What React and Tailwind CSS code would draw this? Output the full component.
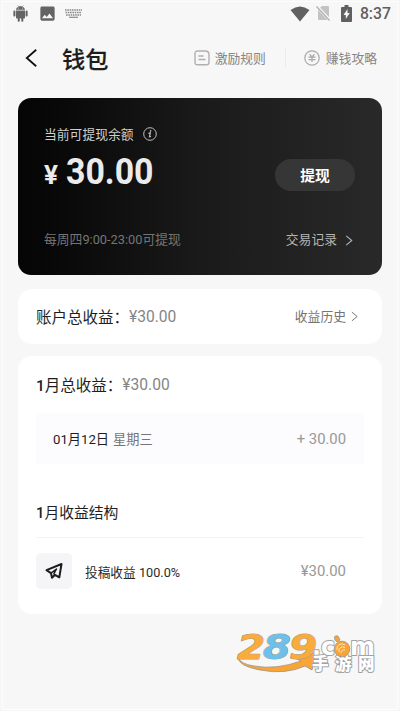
import { AiFillAndroid } from "react-icons/ai";
import { MdImage } from "react-icons/md";

const FONT = "font-[Roboto,'Noto_Sans_CJK_SC',sans-serif]";

function StatusBar() {
  return (
    <div className="flex h-7 items-center pl-[11px] pr-[9px] text-[#646464]">
      <AiFillAndroid className="-mt-px h-[21px] w-[19px]" />
      <MdImage className="-mt-px ml-[8px] h-[19px] w-[19px]" />
      <svg viewBox="0 0 17 9" className="-mt-px ml-[8px] h-[9px] w-[17px]" fill="none" stroke="#8a8a8a">
        <path d="M0 1h17M0.5 3.5h16M1 6h15" strokeWidth="1.5" strokeDasharray="1.6 0.7" />
        <path d="M4 8.3h9" strokeWidth="1.2" />
      </svg>
      <div className="ml-auto flex items-center">
        <svg viewBox="0 0 20 16" className="-mt-px h-4 w-5" fill="#606060">
          <path d="M10 15.5 0.5 4Q10-3 19.5 4Z" />
        </svg>
        <svg viewBox="0 0 15 16" className="-mt-[2px] ml-[6px] h-4 w-[15px]">
          <path d="M2 4.500 6 1h6q1 0 1 1v13H3q-1 0-1-1Z" fill="#c3c3c3" />
          <path d="M0.500 1 14 15.500" stroke="#f7f7f7" strokeWidth="3" />
          <path d="M0.500 1.500 13.500 15.500" stroke="#b0b0b0" strokeWidth="1.300" />
        </svg>
        <svg viewBox="0 0 11 17" className="-mt-[2px] ml-[10px] h-[17px] w-[11px]">
          <path d="M1 2h2.500V0h4v2H10q1 0 1 1v13q0 1-1 1H1q-1 0-1-1V3q0-1 1-1Z" fill="#606060" />
          <path d="M6.500 4 2.500 10h2.300v4l4-6H6.500Z" fill="#f7f7f7" />
        </svg>
        <span className="ml-[8px] text-[15.800px] font-medium leading-5 text-[#5f5f5f]">8:37</span>
      </div>
    </div>
  );
}

function Header() {
  return (
    <div className="flex h-[60px] items-center pl-[25px] pr-[23px]">
      <svg viewBox="0 0 12 18" className="h-[18px] w-3" fill="none" stroke="#111" strokeWidth="1.8">
        <path d="M11.200 0.800 1.800 9l9.400 8.200" />
      </svg>
      <h1 className="ml-[25px] mt-1 text-[23.200px] font-medium leading-8 text-[#1c1c1c] [-webkit-text-stroke:0.2px_#1c1c1c]">钱包</h1>
      <div className="ml-auto flex items-center text-[12.8px] leading-5 text-[#858585]">
        <svg viewBox="0 0 16 16" className="h-4 w-4" fill="none" stroke="#b0b0b0" strokeWidth="1.400">
          <path d="M3.500 1h7.500q4 0 4 3.500v8q0 2.300-2.500 2.300h-9Q1 14.800 1 12.500v-9Q1 1 3.500 1Z" />
          <path d="M4.500 6h5M4.500 9.500h7" />
        </svg>
        <span className="ml-[5px] mt-[2px]">激励规则</span>
        <span className="ml-[19px] h-5 w-px bg-[#ececec]" />
        <svg viewBox="0 0 16 16" className="ml-[18px] h-4 w-4" fill="none" stroke="#a8a8a8" strokeWidth="1.200">
          <circle cx="8" cy="8" r="7.200" />
          <path d="M5.500 4.200 8 7l2.500-2.800M4.500 7.200h7M4.500 9.600h7M8 7v5" />
        </svg>
        <span className="ml-[6px] mt-[2px]">赚钱攻略</span>
      </div>
    </div>
  );
}

function BalanceCard() {
  return (
    <section className="flex h-[177px] flex-col rounded-[13px] bg-linear-to-r from-[#050505] via-[#191a19] to-[#292929] pl-[26px] pr-[27px] text-[#cfcfcf]">
      <div className="mt-[27px] flex h-5 items-center text-[12.8px]">
        <span>当前可提现余额</span>
        <svg viewBox="0 0 14 14" className="mb-[2px] ml-[9px] h-[14px] w-[14px]" fill="none" stroke="#bdbdbd">
          <circle cx="7" cy="7" r="6.300" />
          <path d="M5.500 6.300 7.300 5.900 6.500 9.800 8 9.500" strokeWidth="1.200" />
          <circle cx="7.600" cy="3.900" r="0.500" fill="#bdbdbd" />
        </svg>
      </div>
      <div className="mt-[7px] flex h-[46px] items-center justify-between">
        <div className="-mt-[6px] flex items-baseline font-bold text-[#ebebeb]">
          <span className="w-[22px] text-[26px] leading-none">¥</span>
          <span className="origin-left scale-x-[0.94] text-[36px] leading-none">30.00</span>
        </div>
        <button className="h-8 w-20 rounded-full bg-[#363636] pt-[2px] text-[14.800px] font-bold text-white">提现</button>
      </div>
      <div className="mt-[32px] flex h-5 items-center justify-between text-[12.800px]">
        <span className="text-[#757575]">每周四9:00-23:00可提现</span>
        <span className="flex items-center text-[#b5b5b5]">
          交易记录
          <svg viewBox="0 0 8 12" className="ml-[8px] mr-[2px] h-[11px] w-[8px]" fill="none" stroke="#b5b5b5" strokeWidth="1.200">
            <path d="M1 1 7 6 1 11" />
          </svg>
        </span>
      </div>
    </section>
  );
}

function TotalCard() {
  return (
    <section className="mt-[14px] flex h-[55px] items-center rounded-[14px] bg-white pl-[18px] pr-6">
      <span className="mt-[4px] text-[15.500px] text-[#1e1e1e]">账户总收益：</span>
      <span className="mt-[2px] text-[15.600px] text-[#858585]">¥30.00</span>
      <span className="ml-auto mt-px text-[12.800px] text-[#747474]">收益历史</span>
      <svg viewBox="0 0 8 12" className="ml-[5px] h-[11px] w-[7px]" fill="none" stroke="#747474" strokeWidth="1.100">
        <path d="M1 1 7 6 1 11" />
      </svg>
    </section>
  );
}

function MonthCard() {
  return (
    <section className="mt-3 h-[258px] rounded-[14px] bg-white px-[18px] pt-[17px]">
      <div className="flex h-6 items-center">
        <span className="mt-[3px] text-[15.500px] text-[#1e1e1e]"><b className="font-medium">1</b>月总收益：</span>
        <span className="mt-[2px] text-[15.600px] text-[#858585]">¥30.00</span>
      </div>
      <div className="mt-4 flex h-[51px] items-center bg-[#fcfbfd] pl-[17px] pr-[18px]">
        <span className="mt-[2px] text-[13.200px] text-[#1e1e1e]">01月12日</span>
        <span className="ml-1 mt-[2px] text-[13.200px] text-[#757575]">星期三</span>
        <span className="ml-auto mt-[2px] text-[14.800px] text-[#989898]">+ 30.00</span>
      </div>
      <h2 className="mt-[37px] h-6 text-[14.800px] font-normal leading-6 text-[#1e1e1e]"><b className="font-medium">1</b>月收益结构</h2>
      <div className="mt-[12px] h-px bg-[#f4f4f4]" />
      <div className="mt-[15px] flex h-9 items-center pr-[18px]">
        <div className="flex h-9 w-9 items-center justify-center rounded-[5px] bg-[#f5f4f6]">
          <svg viewBox="0 0 18 18" className="h-[18px] w-[18px]" fill="none" stroke="#1d1d1f" strokeWidth="2" strokeLinejoin="round" strokeLinecap="round">
            <path d="M1.500 8.200 16.500 2 14.300 15.300 10 12.800 7 15.800 6 11.200Z" />
            <path d="M6 11.200 11.500 7 8.800 11.800" strokeWidth="1.500" />
          </svg>
        </div>
        <span className="ml-[13px] mt-[3px] text-[12.700px] text-[#2a2a2a]">投稿收益 100.0%</span>
        <span className="ml-auto text-[14.900px] text-[#989898]">¥30.00</span>
      </div>
    </section>
  );
}

function SiteLogo() {
  return (
    <svg viewBox="0 -10 150 64" className="absolute left-[235px] top-[622px] h-16 w-[150px]" fontFamily="'DejaVu Sans', 'Noto Sans CJK SC', sans-serif" fontWeight="900" strokeLinejoin="round">
      <path d="M3 25q2 7 16 9 22 4 47-5l-4-2 19-7-4 18-7-4Q50 43 25 38 3 34 3 25Z" fill="#f9a535" stroke="#9d928b" strokeWidth="0.8" />
      <g fontSize="33" fontStyle="italic" strokeWidth="1" stroke="#a89a8c" paintOrder="stroke">
        <text x="2" y="27" fill="#f9ab3c" textLength="28" lengthAdjust="spacingAndGlyphs">2</text>
        <text x="28" y="27" fill="#6cc0ea" textLength="28" lengthAdjust="spacingAndGlyphs">8</text>
        <text x="54" y="27" fill="#f9ab3c" textLength="28" lengthAdjust="spacingAndGlyphs">9</text>
      </g>
      <g fill="#fff" stroke="#a2a2a2" paintOrder="stroke">
        <text x="77" y="23" fontSize="25" strokeWidth="2" textLength="23" lengthAdjust="spacingAndGlyphs">.c</text>
        <text x="115" y="23" fontSize="25" strokeWidth="2" textLength="25" lengthAdjust="spacingAndGlyphs">m</text>
        <text x="77" y="38" fontSize="16.500" strokeWidth="2" letterSpacing="6.500">手游网</text>
      </g>
      <g fill="#f9a535" stroke="#9d928b" strokeWidth="0.8">
        <circle cx="107" cy="17" r="7.800" />
        <path d="M100 8q-2-5 3-4l2 4-3 2Z" />
      </g>
      <path d="M102 18a5 5 0 0 1 8-5M104 20a4 4 0 0 1 6-4.500M106 21a3 3 0 0 1 4-3" fill="none" stroke="#fff" strokeWidth="0.700" />
    </svg>
  );
}

export default function App() {
  return (
    <div className={`relative h-[711px] w-[400px] overflow-hidden bg-[#f7f7f7] ${FONT}`}>
      <StatusBar />
      <Header />
      <main className="mt-[10px] px-[18px]">
        <BalanceCard />
        <TotalCard />
        <MonthCard />
      </main>
      <SiteLogo />
      <div className="pointer-events-none absolute inset-x-0.5 bottom-px top-px border border-[#fdfdfd]" />
    </div>
  );
}
